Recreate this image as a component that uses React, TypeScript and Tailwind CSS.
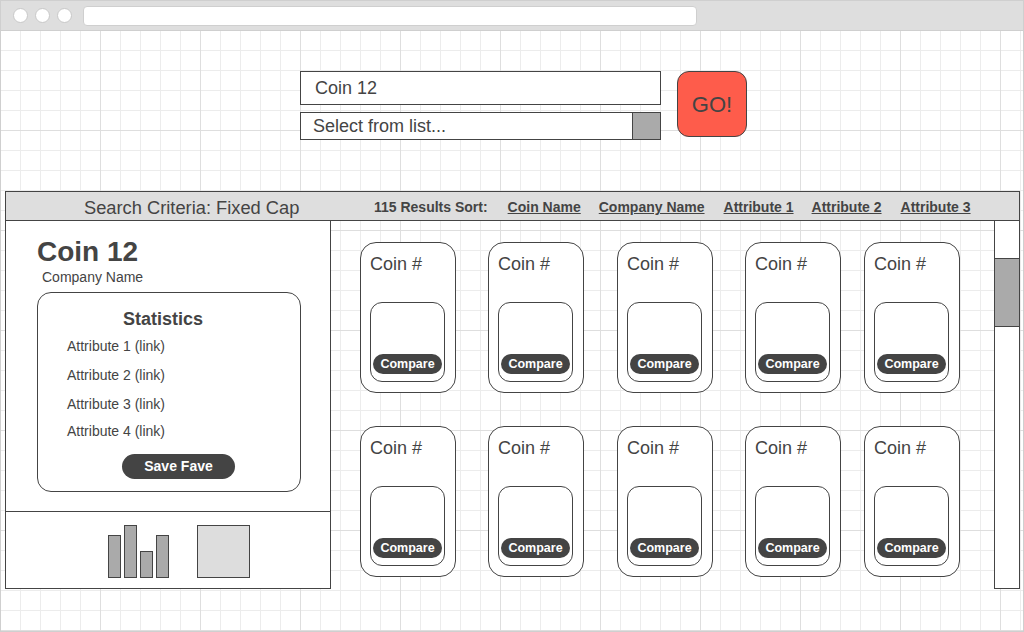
import React from 'react';

const font = "font-['Liberation_Sans',Arial,sans-serif]";

const sortLinks = [
  { label: 'Coin Name', ml: 'ml-[20px]' },
  { label: 'Company Name', ml: 'ml-[18px]' },
  { label: 'Attribute 1', ml: 'ml-[19px]' },
  { label: 'Attribute 2', ml: 'ml-[18px]' },
  { label: 'Attribute 3', ml: 'ml-[19px]' },
];

const attributes = ['Attribute 1 (link)', 'Attribute 2 (link)', 'Attribute 3 (link)', 'Attribute 4 (link)'];

const CoinCard: React.FC = () => (
  <div className="w-[96px] h-[151px] border border-[#444] rounded-[16px] bg-white flex flex-col">
    <div className="pl-[9px] pt-[10px] text-[18px] leading-[22px] text-[#444]">Coin #</div>
    <div className="ml-[9px] mt-[27px] w-[75px] h-[80px] border border-[#444] rounded-[12px] flex flex-col justify-end pb-[7px] px-[2px]">
      <div className="h-[20px] rounded-full bg-[#444] text-white font-bold text-[12.5px] leading-[20px] flex items-center justify-center">
        Compare
      </div>
    </div>
  </div>
);

export default function App() {
  return (
    <div className={`${font} w-[1024px] h-[632px] overflow-hidden flex flex-col border border-[#cfcfcf] text-[#444]`}>
      {/* browser chrome */}
      <div className="h-[30px] shrink-0 bg-[#dedede] border-b border-[#cfcfcf] flex items-center pl-[12px]">
        <div className="flex gap-[7px]">
          <span className="w-[15px] h-[15px] rounded-full bg-white border border-[#c8c8c8]" />
          <span className="w-[15px] h-[15px] rounded-full bg-white border border-[#c8c8c8]" />
          <span className="w-[15px] h-[15px] rounded-full bg-white border border-[#c8c8c8]" />
        </div>
        <div className="ml-[11px] w-[614px] h-[20px] rounded-[4px] bg-white border border-[#cfcfcf]" />
      </div>

      {/* canvas */}
      <div className="flex-1 bg-white bg-[image:linear-gradient(to_right,#dedede_1px,transparent_1px),linear-gradient(to_bottom,#dedede_1px,transparent_1px),linear-gradient(to_right,#ececec_1px,transparent_1px),linear-gradient(to_bottom,#ececec_1px,transparent_1px)] bg-[size:100px_100px,100px_100px,20px_20px,20px_20px] bg-[position:-1px_-1px] pt-[40px]">
        {/* search */}
        <div className="flex ml-[299px]">
          <div className="flex flex-col gap-[7px] w-[361px]">
            <div className="h-[34px] border border-[#444] bg-white pl-[14px] flex items-center text-[18px]">Coin 12</div>
            <div className="h-[28px] border border-[#444] bg-white flex items-center">
              <span className="flex-1 pl-[12px] text-[18px]">Select from list...</span>
              <span className="w-[28px] h-full bg-[#aaa] border-l border-[#444]" />
            </div>
          </div>
          <div className="ml-[16px] w-[70px] h-[66px] rounded-[12px] bg-[#fe5c4b] border border-[#444] flex items-center justify-center text-[22px]">
            GO!
          </div>
        </div>

        {/* results */}
        <div className="ml-[4px] mt-[51px] w-[1015px]">
          <div className="h-[30px] bg-[#dedede] border border-[#444] flex items-center pt-[3px]">
            <span className="w-[368px] pl-[78px] text-[18.3px]">Search Criteria: Fixed Cap</span>
            <span className="text-[14px] font-bold">115 Results Sort:</span>
            {sortLinks.map((l) => (
              <span key={l.label} className={`${l.ml} text-[14px] font-bold underline`}>
                {l.label}
              </span>
            ))}
          </div>

          <div className="flex">
            {/* left panel */}
            <div className="w-[326px] h-[368px] border-x border-b border-[#444] bg-white flex flex-col">
              <div className="h-[290px] pl-[31px] pt-[14px]">
                <div className="text-[28px] font-bold leading-[34px]">Coin 12</div>
                <div className="pl-[5px] text-[14px] leading-[17px]">Company Name</div>
                <div className="mt-[6px] w-[264px] h-[200px] border border-[#444] rounded-[14px] flex flex-col">
                  <div className="pt-[15px] pr-[12px] text-center text-[18px] font-bold leading-[22px]">Statistics</div>
                  <div className="pl-[29px] mt-[8px] text-[14px]">
                    <div className="leading-[17px]">{attributes[0]}</div>
                    <div className="leading-[17px] mt-[12px]">{attributes[1]}</div>
                    <div className="leading-[17px] mt-[12px]">{attributes[2]}</div>
                    <div className="leading-[17px] mt-[10px]">{attributes[3]}</div>
                  </div>
                  <div className="ml-[84px] mt-[14px] w-[113px] h-[25px] rounded-full bg-[#444] text-white font-bold text-[14px] flex items-center justify-center">
                    Save Fave
                  </div>
                </div>
              </div>
              <div className="flex-1 border-t border-[#444] flex items-end pl-[102px] pb-[10px]">
                <div className="flex items-end gap-[3px]">
                  <span className="w-[13px] h-[43px] bg-[#aaa] border border-[#444]" />
                  <span className="w-[13px] h-[53px] bg-[#aaa] border border-[#444]" />
                  <span className="w-[13px] h-[27px] bg-[#aaa] border border-[#444]" />
                  <span className="w-[13px] h-[43px] bg-[#aaa] border border-[#444]" />
                </div>
                <span className="ml-[28px] w-[53px] h-[53px] bg-[#ddd] border border-[#444]" />
              </div>
            </div>

            {/* cards */}
            <div className="w-[663px] pl-[29px] pt-[21px]">
              <div className="grid grid-cols-[128px_129px_128px_119px_96px] gap-y-[33px]">
                {Array.from({ length: 10 }).map((_, i) => (
                  <CoinCard key={i} />
                ))}
              </div>
            </div>

            {/* scrollbar */}
            <div className="w-[26px] h-[368px] border-x border-b border-[#444] bg-white pt-[37px]">
              <div className="h-[69px] bg-[#aaa] border-y border-[#444]" />
            </div>
          </div>
        </div>
      </div>
    </div>
  );
}
